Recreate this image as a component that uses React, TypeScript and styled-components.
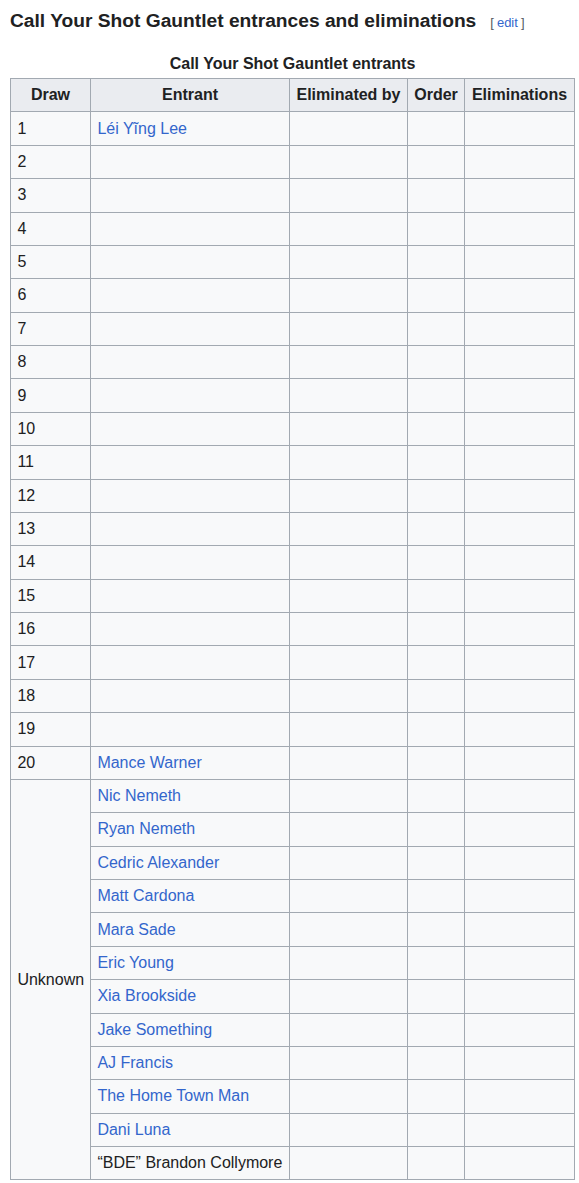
import styled, { createGlobalStyle } from "styled-components";

const GlobalStyle = createGlobalStyle`
  body {
    margin: 0;
    background: #ffffff;
    font-family: "Liberation Sans", Arial, sans-serif;
    color: #202122;
  }
`;

const Page = styled.div`
  padding: 8px 5px 0 10px;
`;

const Heading = styled.h3`
  margin: 0;
  display: flex;
  align-items: baseline;
  gap: 14px;
  font-size: 19.2px;
  font-weight: bold;
  line-height: 26px;
`;

const EditLink = styled.span`
  font-size: 13px;
  font-weight: normal;
  color: #54595d;
  a {
    color: #3366cc;
    text-decoration: none;
    margin: 0 3px;
  }
`;

const Table = styled.table`
  margin-top: 16px;
  border-collapse: collapse;
  background: #f8f9fa;
  border: 1px solid #a2a9b1;
  font-size: 16px;
  width: 564px;
  table-layout: fixed;
`;

const Caption = styled.caption`
  font-weight: bold;
  font-size: 16px;
  line-height: 24px;
  padding-bottom: 2px;
`;

const Th = styled.th`
  background: #eaecf0;
  border: 1px solid #a2a9b1;
  padding: 3.2px 6px;
  line-height: 26px;
  text-align: center;
  font-weight: bold;
  white-space: nowrap;
`;

const Td = styled.td`
  border: 1px solid #a2a9b1;
  padding: 3.2px 6.4px;
  line-height: 26px;
  height: 26px;
  vertical-align: middle;
  white-space: nowrap;
`;

const Link = styled.a`
  color: #3366cc;
  text-decoration: none;
`;

const numbered: (string | null)[] = [
  "Léi Yĩng Lee",
  null, null, null, null, null, null, null, null, null,
  null, null, null, null, null, null, null, null, null,
  "Mance Warner",
];

const unknown = [
  "Nic Nemeth",
  "Ryan Nemeth",
  "Cedric Alexander",
  "Matt Cardona",
  "Mara Sade",
  "Eric Young",
  "Xia Brookside",
  "Jake Something",
  "AJ Francis",
  "The Home Town Man",
  "Dani Luna",
];

const EmptyCells = () => (
  <>
    <Td />
    <Td />
    <Td />
  </>
);

const App = () => {
  return (
    <Page>
      <GlobalStyle />
      <Heading>
        Call Your Shot Gauntlet entrances and eliminations
        <EditLink>
          [<a href="#">edit</a>]
        </EditLink>
      </Heading>
      <Table>
        <Caption>Call Your Shot Gauntlet entrants</Caption>
        <colgroup>
          <col style={{ width: 80 }} />
          <col style={{ width: 199 }} />
          <col style={{ width: 118 }} />
          <col style={{ width: 57 }} />
          <col style={{ width: 110 }} />
        </colgroup>
        <thead>
          <tr>
            <Th>Draw</Th>
            <Th>Entrant</Th>
            <Th>Eliminated by</Th>
            <Th>Order</Th>
            <Th>Eliminations</Th>
          </tr>
        </thead>
        <tbody>
          {numbered.map((name, i) => (
            <tr key={i}>
              <Td>{i + 1}</Td>
              <Td>{name && <Link href="#">{name}</Link>}</Td>
              <EmptyCells />
            </tr>
          ))}
          {unknown.map((name, i) => (
            <tr key={name}>
              {i === 0 && <Td rowSpan={12}>Unknown</Td>}
              <Td>
                <Link href="#">{name}</Link>
              </Td>
              <EmptyCells />
            </tr>
          ))}
          <tr>
            <Td>“BDE” Brandon Collymore</Td>
            <EmptyCells />
          </tr>
        </tbody>
      </Table>
    </Page>
  );
};

export default App;
